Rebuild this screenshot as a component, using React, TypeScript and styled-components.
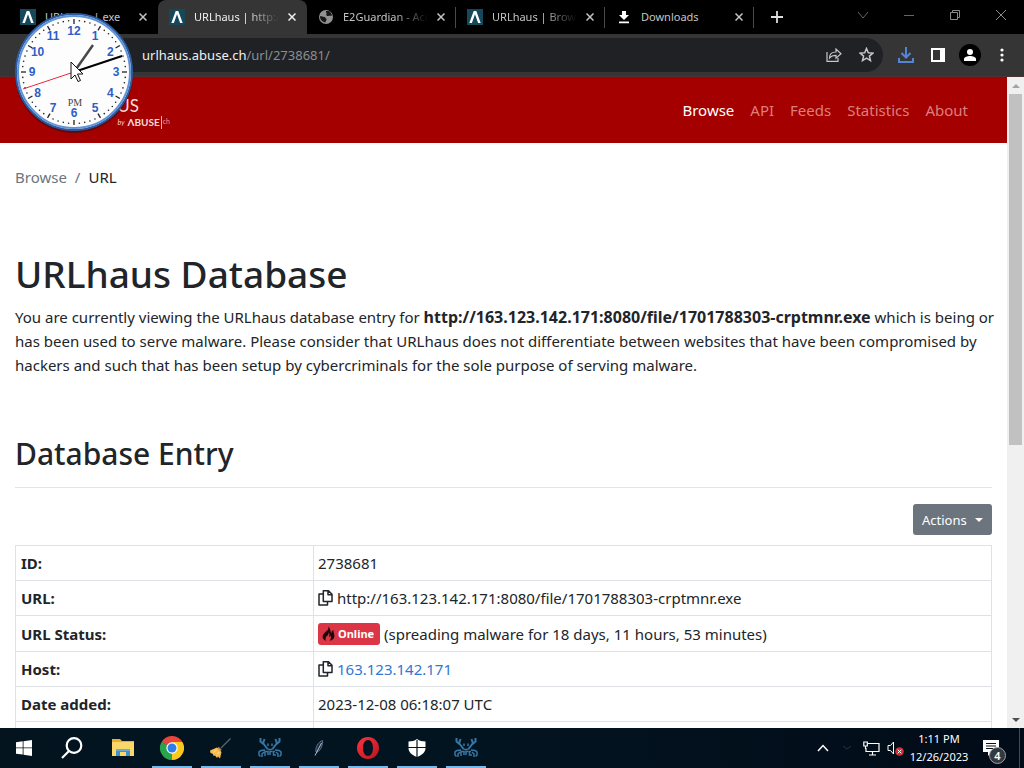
import React from 'react';
import styled, { createGlobalStyle, css } from 'styled-components';

const GlobalStyle = createGlobalStyle`
  *, *::before, *::after { box-sizing: border-box; }
  body { margin: 0; overflow: hidden; font-family: "Noto Sans", sans-serif; color: #212529; background: #fff; }
  button { font: inherit; border: 0; padding: 0; background: none; color: inherit; }
  a { color: inherit; text-decoration: none; }
  svg { display: block; flex: none; }
`;

const Screen = styled.div`
  position: relative;
  display: flex;
  flex-direction: column;
  height: 100vh;
`;

/* Browser chrome */
const TabStrip = styled.header`
  display: flex;
  flex: none;
  height: 34px;
  padding-left: 9px;
  background: #000;
  color: #c4c4c4;
`;

const Tab = styled.div<{ $active?: boolean; $divider?: boolean }>`
  display: flex;
  align-items: center;
  gap: 9px;
  width: 149px;
  padding: 0 10px 0 11px;
  border-right: 1px solid ${(p) => (p.$divider ? '#4a4a4a' : 'transparent')};
  border-image: ${(p) => (p.$divider ? 'linear-gradient(transparent 8px, #4a4a4a 8px, #4a4a4a 27px, transparent 27px) 1' : 'none')};
  ${(p) =>
    p.$active &&
    css`
      background: #353535;
      border-radius: 8px 8px 0 0;
      color: #f0f0f0;
    `}
`;

const TabTitle = styled.span<{ $fade?: boolean }>`
  flex: 1;
  min-width: 0;
  overflow: hidden;
  white-space: nowrap;
  font-size: 11px;
  line-height: 16px;
  ${(p) => p.$fade && css`mask-image: linear-gradient(to right, #000 60%, transparent);`}
`;

const IconButton = styled.button`
  display: grid;
  place-items: center;
`;

const NewTab = styled(IconButton)`
  width: 45px;
`;

const WindowButtons = styled.div`
  display: flex;
  margin-left: auto;
  height: 29px;
  color: #8c8c8c;
`;

const WindowButton = styled(IconButton)`
  width: 46px;
`;

const Toolbar = styled.div`
  display: flex;
  align-items: center;
  flex: none;
  height: 43px;
  padding: 0 6px 1px 92px;
  background: #353535;
  border-bottom: 1px solid #4c3436;
`;

const AddressBox = styled.div`
  display: flex;
  align-items: center;
  flex: 1;
  height: 34px;
  padding: 0 9px 0 50px;
  border-radius: 17px;
  background: #1f2124;
  color: #c6c6c6;
`;

const Address = styled.p`
  flex: 1;
  margin: 0;
  font-size: 13px;
  line-height: 20px;
  color: #8c8e90;
`;

const AddressHost = styled.span`
  color: #f0f0f0;
`;

const ToolButton = styled(IconButton)`
  width: 32px;
  height: 32px;
`;

const ToolGroup = styled.div`
  display: flex;
  padding-left: 7px;
  color: #fff;
`;

const AddressActions = styled.div`
  display: flex;
  margin-right: -8px;
`;

/* Web page */
const Viewport = styled.div`
  display: flex;
  flex: 1;
  min-height: 0;
`;

const Page = styled.div`
  flex: 1;
  min-width: 0;
  overflow: hidden;
`;

const NavBar = styled.nav`
  display: flex;
  align-items: center;
  justify-content: space-between;
  height: 66px;
  padding: 0 39px 0 16px;
  background: #a50000;
`;

const Brand = styled.a`
  display: flex;
  flex-direction: column;
  align-items: flex-end;
  width: 154px;
  padding-top: 4px;
  color: #f6dcdc;
`;

const BrandName = styled.span`
  width: 123px;
  margin-right: 31px;
  text-align: right;
  font-family: Lato, sans-serif;
  font-size: 17px;
  line-height: 20px;
`;

const BrandOwner = styled.span`
  display: flex;
  align-items: center;
  gap: 3px;
  font-family: Lato, sans-serif;
  font-size: 10px;
  font-weight: 700;
  line-height: 13px;
`;

const BrandBy = styled.i`
  font-size: 7px;
  font-weight: 400;
`;

const BrandTld = styled.span`
  margin-left: -2px;
  padding: 0 0 3px 1px;
  border-left: 1px solid #e8b0b0;
  font-size: 7px;
  font-weight: 400;
  line-height: 10px;
  color: #e99;
`;

const NavLinks = styled.div`
  display: flex;
  gap: 16px;
  font-size: 15px;
  line-height: 24px;
`;

const NavLink = styled.a<{ $current?: boolean }>`
  color: ${(p) => (p.$current ? '#fff' : '#dc7f7c')};
`;

const Content = styled.main`
  padding: 0 15px;
  font-size: 15px;
  line-height: 24px;
`;

const Breadcrumb = styled.div`
  display: flex;
  gap: 8px;
  padding: 22px 0 0;
  color: #6c757d;
`;

const Crumb = styled.span`
  color: #212529;
`;

const Title = styled.h1`
  margin: 61px 0 7px;
  font-size: 37px;
  font-weight: 500;
  line-height: 48px;
`;

const Intro = styled.p`
  margin: 0 -4px 0 0;
`;

const EntryUrl = styled.strong`
  font-size: 16px;
  line-height: 20px;
`;

const SectionTitle = styled.h2`
  margin: 57px 0 0;
  padding-bottom: 13px;
  border-bottom: 1px solid #e3e4e5;
  font-size: 30px;
  font-weight: 500;
  line-height: 40px;
`;

const ActionRow = styled.div`
  display: flex;
  justify-content: flex-end;
  padding: 16px 0 10px;
`;

const ActionsButton = styled.button`
  display: flex;
  align-items: center;
  justify-content: space-between;
  width: 79px;
  height: 31px;
  padding: 0 9px;
  border-radius: 3px;
  background: #6c757d;
  color: #fff;
  font-size: 13px;
`;

const Caret = styled.span`
  border: 4px solid transparent;
  border-top-color: #fff;
  border-bottom: 0;
`;

const EntryTable = styled.table`
  width: 100%;
  table-layout: fixed;
  border-collapse: collapse;
`;

const HeadCell = styled.th<{ $tall?: boolean }>`
  width: 298px;
  height: ${(p) => (p.$tall ? 36 : 35)}px;
  padding: 0 5px;
  border: 1px solid #dee2e6;
  text-align: left;
`;

const Cell = styled.td`
  padding: 0 5px 0 4px;
  border: 1px solid #dee2e6;
`;

const Value = styled.div`
  display: flex;
  align-items: center;
  gap: 4px;
  line-height: 24px;
`;

const HostLink = styled.a`
  color: #2f78cf;
`;

const Badge = styled.span`
  display: flex;
  align-items: center;
  gap: 3px;
  width: 62px;
  height: 22px;
  padding-left: 4px;
  border-radius: 3px;
  background: #dc3545;
  color: #fff;
  font-size: 11px;
  font-weight: 700;
`;

const ScrollTrack = styled.div`
  display: flex;
  flex-direction: column;
  align-items: center;
  justify-content: space-between;
  flex: none;
  width: 17px;
  padding: 7px 0 6px;
  background: #f0f0f0;
`;

const ScrollThumb = styled.div`
  flex: 0 0 351px;
  width: 13px;
  margin: 6px 0 auto;
  background: #c1c1c1;
`;

const ScrollArrow = styled.div<{ $down?: boolean }>`
  border: 4px solid transparent;
  ${(p) => (p.$down ? 'border-top-color: #505050; border-bottom: 0;' : 'border-bottom-color: #a3a3a3; border-top: 0;')}
`;

/* Desktop */
const Taskbar = styled.footer`
  display: flex;
  flex: none;
  height: 40px;
  background: linear-gradient(to right, #03141f, #021420 50%, #020b18);
  color: #fff;
`;

const Apps = styled.div`
  display: flex;
  gap: 1px;
  margin-left: 3px;
`;

const TaskButton = styled(IconButton)<{ $running?: boolean }>`
  width: 48px;
  height: 40px;
  ${(p) => p.$running && css`background: linear-gradient(#76b9ed, #76b9ed) 50% 100% / 40px 2px no-repeat;`}
`;

const Tray = styled.div`
  display: flex;
  align-items: center;
  margin-left: auto;
  padding-right: 4px;
`;

const TrayButton = styled(IconButton)`
  width: 24px;
  height: 40px;
`;

const DateTime = styled.time`
  width: 64px;
  text-align: center;
  font-size: 11px;
  line-height: 18px;
`;

const Notifications = styled.button`
  position: relative;
  display: grid;
  place-items: center;
  width: 49px;
  height: 40px;
  padding-right: 8px;
  border-right: 1px solid #3b4a55;
`;

const Count = styled.span`
  position: absolute;
  right: 13px;
  bottom: 4px;
  width: 17px;
  height: 17px;
  border: 1px solid #99a0a6;
  border-radius: 50%;
  background: #34393e;
  font-size: 11px;
  font-weight: 600;
  line-height: 15px;
`;

const ClockWidget = styled.div`
  position: absolute;
  top: 11px;
  left: 13px;
`;

function Close({ size = 8 }: { size?: number }) {
  return (
    <svg width={size} height={size} viewBox="0 0 8 8" stroke="currentColor" strokeWidth="1.5">
      <path d="M0.5 0.5 7.5 7.5M7.5 0.5 0.5 7.5" />
    </svg>
  );
}

function HausIcon() {
  return (
    <svg width="16" height="16" viewBox="0 0 16 16">
      <rect width="16" height="16" fill="#14485a" />
      <path d="M2.3 14 6.7 2h2.6l4.4 12h-2.6L8 5.3 4.9 14Z" fill="#fff" />
    </svg>
  );
}

function GlobeIcon() {
  return (
    <svg width="16" height="16" viewBox="0 0 16 16">
      <circle cx="8" cy="8" r="7" fill="#929292" />
      <path d="M2 7c2 0 2.500 1 4.500 1 1 0 1 1.500 2 2 .5 1-1 1.500-1 3.500C4.500 13 2 11 2 7ZM8 2h3c1.500 1 2.500 2.500 3 4.500-1.500 1-2-.5-3.500.5C9 7.500 7.500 6 8.500 5 9 4 7.500 3.500 8 2Z" fill="#181818" />
    </svg>
  );
}

function DownloadsIcon() {
  return (
    <svg width="16" height="16" viewBox="0 0 16 16" fill="#fff">
      <path d="M6 2h4v4h3l-5 5-5-5h3ZM3 12.500h10v1.800H3Z" />
    </svg>
  );
}

const TABS = [
  { title: 'URLhaus | exe', icon: <HausIcon /> },
  { title: 'URLhaus | http://163.123', icon: <HausIcon />, active: true, fade: true },
  { title: 'E2Guardian - Access Denied', icon: <GlobeIcon />, fade: true, divider: true },
  { title: 'URLhaus | Browse', icon: <HausIcon />, fade: true, divider: true },
  { title: 'Downloads', icon: <DownloadsIcon />, divider: true },
];

function CopyIcon() {
  return (
    <svg width="15" height="16" viewBox="0 0 15 16" fill="none" stroke="#212529" strokeWidth="1.500" strokeLinejoin="round">
      <path d="M5.300.800h5.200l3.500 3.500v7.200H5.300ZM10 1v3.700h4M5 4H1v11h8.500v-3.300" />
    </svg>
  );
}

function FireIcon() {
  return (
    <svg width="13" height="15" viewBox="0 0 13 15">
      <path d="M6.200.500c.8 2.700-.5 3.600-2.200 5.100C1.900 7.500.400 9 .600 11c.2 2.100 1.700 3.500 3.600 3.800-1.500-2.200-.5-3.700 1-5.100 1.200-1.100 1.500-2.200 1.500-3.200 1 1.500.9 3 .1 4.300.7 0 1.400-.7 1.800-1.300.6 1.800.4 3.500-.9 5.300 2.600-.4 4.500-2 4.700-4.500.2-2.200-1.300-3.700-1-6.300-1.700.7-2 2-1.900 3.300C8 6.200 9.100 2.800 6.200.500Z" fill="#17090b" />
    </svg>
  );
}

function ChromeIcon() {
  return (
    <svg width="24" height="24" viewBox="0 0 24 24">
      <path d="M12 12 1.600 6A12 12 0 0 1 22.400 6Z" fill="#e8453c" />
      <path d="M12 12 22.400 6A12 12 0 0 1 12 24Z" fill="#fbc81c" />
      <path d="M12 12v12A12 12 0 0 1 1.600 6Z" fill="#2ba24c" />
      <path d="M12 6h10.400L17.200 15 12 24l5.200-9Z" fill="#fbc81c" />
      <path d="M1.600 6 6.800 15 12 12Z" fill="#2ba24c" />
      <circle cx="12" cy="12" r="5.700" fill="#fff" />
      <circle cx="12" cy="12" r="4.500" fill="#2f7de9" />
    </svg>
  );
}

function FolderIcon() {
  return (
    <svg width="22" height="20" viewBox="0 0 22 20">
      <path d="M0 1h8l2 2h12v15H0Z" fill="#e5ae37" />
      <path d="M0 4h22v14H0Z" fill="#fbd668" />
      <path d="M4 18v-7h14v7h-4v-4H8v4Z" fill="#3f8fca" />
      <path d="M4 11h14v2H4Z" fill="#65addb" />
    </svg>
  );
}

function BroomIcon() {
  return (
    <svg width="24" height="24" viewBox="0 0 24 24">
      <path d="m12 12 9.500-9.500" stroke="#59666a" strokeWidth="1.300" />
      <path d="m9 11.500 3 3" stroke="#b9854b" strokeWidth="2" />
      <path d="M8 11.500 12.500 16 11 22.500l-2-2-1 1.500-2-2.500-1.500.5L4 18l-2.500-1L1 14.500Z" fill="#f6bd50" />
      <path d="m7.500 14-3 2.500M10 16l-2 2.500" stroke="#ffe0a0" />
    </svg>
  );
}

function CrabIcon() {
  return (
    <svg width="26" height="22" viewBox="0 0 26 22" fill="none" stroke="#3876a6">
      <path d="M3.500 1v3.500L6 6.500 7.500 2M22.500 1v3.500L20 6.500 18.500 2M6 6l4.500 6M20 6l-4.500 6" strokeWidth="2" />
      <path d="M11 6.500V9M15 6.500V9M10 11.500c2 1.500 4 1.500 6 0" strokeWidth="1.500" />
      <path d="M8 13c-3 0-5 .5-6 2v3l1.500 1.500M18 13c3 0 5 .5 6 2v3l-1.500 1.500M7 15l-2 2v3M19 15l2 2v3M8 19v-4.500h3V18M13 18v-3.500h2.500M18 14.500h-1.500V18H19" strokeWidth="1.500" />
    </svg>
  );
}

function FeatherIcon() {
  return (
    <svg width="16" height="20" viewBox="0 0 16 20">
      <path d="M5 14C4 9 7.500 4 11.500 2.500 12 6 10 12 6.500 14Z" fill="#1b2b40" stroke="#60778f" />
      <path d="M4 17.500 10.500 5" stroke="#b5c3d1" />
    </svg>
  );
}

function OperaIcon() {
  return (
    <svg width="24" height="24" viewBox="0 0 24 24">
      <defs>
        <linearGradient id="opera" x2="1" y2="1">
          <stop stopColor="#ff3340" />
          <stop offset="1" stopColor="#b8141f" />
        </linearGradient>
      </defs>
      <path fillRule="evenodd" fill="url(#opera)" d="M12 1a11 11 0 1 0 0 22 11 11 0 1 0 0-22ZM12 4c3 0 5 3.500 5 8s-2 8-5 8-5-3.500-5-8 2-8 5-8Z" />
    </svg>
  );
}

function ShieldIcon() {
  return (
    <svg width="18" height="18" viewBox="0 0 18 18">
      <path d="M9 0c2.500 1.800 5.200 2.500 8.500 2.500V9c0 4-3 7-8.500 9C3.500 16 .500 13 .500 9V2.500C3.800 2.500 6.500 1.800 9 0Z" fill="#fff" />
      <path d="M9 1v17M0 8.500h18" stroke="#021420" strokeWidth="1.200" />
    </svg>
  );
}

const RUNNING_APPS = [
  { name: 'Google Chrome', icon: <ChromeIcon /> },
  { name: 'Cleaner', icon: <BroomIcon /> },
  { name: 'Crab', icon: <CrabIcon /> },
  { name: 'Feather', icon: <FeatherIcon /> },
  { name: 'Opera', icon: <OperaIcon /> },
  { name: 'Windows Security', icon: <ShieldIcon /> },
  { name: 'Crab', icon: <CrabIcon /> },
];

function AnalogClock() {
  const turn = (n: number) => (n * Math.PI) / 30;
  return (
    <ClockWidget>
      <svg width="122" height="124" viewBox="0 0 122 124">
        <ellipse cx="61" cy="63" rx="59" ry="59" fill="#10141a" opacity=".45" />
        <circle cx="61" cy="61" r="58" fill="#fdfdfe" stroke="#2d5ba3" strokeWidth="2" />
        <circle cx="61" cy="61" r="56" fill="none" stroke="#5f93d6" strokeWidth="2" />
        {Array.from({ length: 60 }, (_, i) => {
          const s = Math.sin(turn(i));
          const c = -Math.cos(turn(i));
          return i % 5 === 0 ? (
            <path key={i} d={`M${61 + 48 * s} ${61 + 48 * c}L${61 + 53 * s} ${61 + 53 * c}`} stroke="#222" strokeWidth="1.300" />
          ) : (
            <circle key={i} cx={61 + 51.500 * s} cy={61 + 51.500 * c} r=".8" fill="#222" />
          );
        })}
        {Array.from({ length: 12 }, (_, i) => (
          <text
            key={i}
            x={61 + 42 * Math.sin(turn((i + 1) * 5))}
            y={65 - 41 * Math.cos(turn((i + 1) * 5))}
            textAnchor="middle"
            fontFamily="Liberation Sans, sans-serif"
            fontWeight="700"
            fontSize="12"
            fill="#2f5fc6"
          >
            {i + 1}
          </text>
        ))}
        <text x="62" y="95" textAnchor="middle" fontFamily="Liberation Serif, serif" fontSize="10" fill="#444">PM</text>
        <path d="M61 61 80 34" stroke="#484848" strokeWidth="2.500" />
        <path d="M61 61 109 45" stroke="#000" strokeWidth="2" />
        <path d="M61 61 10 78" stroke="#e02b45" />
        <path d="M58 51v17l4-4 3 6.500 2.500-1-3-6.500h5.500Z" fill="#fff" stroke="#111" />
      </svg>
    </ClockWidget>
  );
}

export default function App() {
  return (
    <Screen>
      <GlobalStyle />
      <TabStrip>
        {TABS.map((tab, i) => (
          <Tab key={i} $active={tab.active} $divider={tab.divider}>
            {tab.icon}
            <TabTitle $fade={tab.fade}>{tab.title}</TabTitle>
            <IconButton aria-label="Close tab"><Close /></IconButton>
          </Tab>
        ))}
        <NewTab aria-label="New tab">
          <svg width="12" height="12" viewBox="0 0 12 12" stroke="#ddd" strokeWidth="1.800"><path d="M6 0v12M0 6h12" /></svg>
        </NewTab>
        <WindowButtons>
          <WindowButton aria-label="Search tabs">
            <svg width="12" height="8" viewBox="0 0 12 8" fill="none" stroke="#666"><path d="m1 1 5 6 5-6" /></svg>
          </WindowButton>
          <WindowButton aria-label="Minimize">
            <svg width="10" height="10" viewBox="0 0 10 10" stroke="#666"><path d="M0 5.500h10" /></svg>
          </WindowButton>
          <WindowButton aria-label="Restore">
            <svg width="10" height="10" viewBox="0 0 10 10" fill="none" stroke="currentColor"><path d="M.5 2.500h7v7h-7ZM2.500 2V.5h7v7H8" /></svg>
          </WindowButton>
          <WindowButton aria-label="Close">
            <svg width="10" height="10" viewBox="0 0 10 10" stroke="currentColor"><path d="m0 0 10 10M10 0 0 10" /></svg>
          </WindowButton>
        </WindowButtons>
      </TabStrip>
      <Toolbar>
        <AddressBox>
          <Address><AddressHost>urlhaus.abuse.ch</AddressHost>/url/2738681/</Address>
          <AddressActions>
            <ToolButton aria-label="Share">
              <svg width="16" height="14" viewBox="0 0 16 14" fill="none" stroke="currentColor" strokeWidth="1.200">
                <path d="M1 4v9.300h11V10M3.500 10c0-4 2.500-6 6.500-6V1l5 4.700-5 4.500V7.300C7 7.300 5 8 3.500 10Z" />
              </svg>
            </ToolButton>
            <ToolButton aria-label="Bookmark">
              <svg width="15" height="15" viewBox="0 0 15 15" fill="none" stroke="currentColor" strokeWidth="1.500">
                <path d="m7.500 1.500 1.800 4.200 4.600.4-3.500 3 1.100 4.500-4-2.400-4 2.400 1.100-4.500-3.500-3 4.600-.4Z" />
              </svg>
            </ToolButton>
          </AddressActions>
        </AddressBox>
        <ToolGroup>
          <ToolButton aria-label="Downloads">
            <svg width="16" height="16" viewBox="0 0 16 16" fill="none" stroke="#5384d8" strokeWidth="2">
              <path d="M8 0v10M3.500 6 8 10.500 12.500 6M1 11v4h14v-4" />
            </svg>
          </ToolButton>
          <ToolButton aria-label="Side panel">
            <svg width="14" height="14" viewBox="0 0 14 14"><path fillRule="evenodd" fill="#fff" d="M0 0h14v14H0ZM2 2v10h7V2Z" /></svg>
          </ToolButton>
          <ToolButton aria-label="Profile">
            <svg width="22" height="22" viewBox="0 0 22 22">
              <circle cx="11" cy="11" r="11" fill="#000" />
              <circle cx="11" cy="8" r="3" fill="#fff" />
              <path d="M5 17v-2c0-2 3.500-3 6-3s6 1 6 3v2Z" fill="#fff" />
            </svg>
          </ToolButton>
          <ToolButton aria-label="Menu">
            <svg width="4" height="14" viewBox="0 0 4 14" fill="#fff">
              <circle cx="2" cy="2" r="1.600" /><circle cx="2" cy="7" r="1.600" /><circle cx="2" cy="12" r="1.600" />
            </svg>
          </ToolButton>
        </ToolGroup>
      </Toolbar>

      <Viewport>
        <Page>
          <NavBar>
            <Brand href="#">
              <BrandName>HAUS</BrandName>
              <BrandOwner><BrandBy>by</BrandBy>ΛBUSE<BrandTld>ch</BrandTld></BrandOwner>
            </Brand>
            <NavLinks>
              <NavLink href="#" $current>Browse</NavLink>
              <NavLink href="#">API</NavLink>
              <NavLink href="#">Feeds</NavLink>
              <NavLink href="#">Statistics</NavLink>
              <NavLink href="#">About</NavLink>
            </NavLinks>
          </NavBar>
          <Content>
            <Breadcrumb><a href="#">Browse</a><span>/</span><Crumb>URL</Crumb></Breadcrumb>
            <Title>URLhaus Database</Title>
            <Intro>
              You are currently viewing the URLhaus database entry for{' '}
              <EntryUrl>http://163.123.142.171:8080/file/1701788303-crptmnr.exe</EntryUrl> which is being or has been used to
              serve malware. Please consider that URLhaus does not differentiate between websites that have been
              compromised by hackers and such that has been setup by cybercriminals for the sole purpose of serving malware.
            </Intro>
            <SectionTitle>Database Entry</SectionTitle>
            <ActionRow><ActionsButton>Actions<Caret /></ActionsButton></ActionRow>
            <EntryTable>
              <tbody>
                <tr><HeadCell scope="row">ID:</HeadCell><Cell>2738681</Cell></tr>
                <tr>
                  <HeadCell scope="row">URL:</HeadCell>
                  <Cell><Value><CopyIcon />http://163.123.142.171:8080/file/1701788303-crptmnr.exe</Value></Cell>
                </tr>
                <tr>
                  <HeadCell scope="row" $tall>URL Status:</HeadCell>
                  <Cell><Value><Badge><FireIcon />Online</Badge>(spreading malware for 18 days, 11 hours, 53 minutes)</Value></Cell>
                </tr>
                <tr>
                  <HeadCell scope="row">Host:</HeadCell>
                  <Cell><Value><CopyIcon /><HostLink href="#">163.123.142.171</HostLink></Value></Cell>
                </tr>
                <tr><HeadCell scope="row">Date added:</HeadCell><Cell>2023-12-08 06:18:07 UTC</Cell></tr>
                <tr><HeadCell scope="row" /><Cell /></tr>
              </tbody>
            </EntryTable>
          </Content>
        </Page>
        <ScrollTrack><ScrollArrow /><ScrollThumb /><ScrollArrow $down /></ScrollTrack>
      </Viewport>

      <Taskbar>
        <TaskButton aria-label="Start">
          <svg width="16" height="16" viewBox="0 0 16 16" fill="#fff">
            <path d="M0 2.300 6.700 1.300v6.200H0ZM7.500 1.200 16 0v7.500H7.500ZM0 8.300h6.700v6.300L0 13.700ZM7.500 8.300H16V16l-8.500-1.200Z" />
          </svg>
        </TaskButton>
        <TaskButton aria-label="Search">
          <svg width="22" height="22" viewBox="0 0 22 22" fill="none" stroke="#fff" strokeWidth="2.200">
            <circle cx="13" cy="8.500" r="7.300" /><path d="m8 14-7 7" />
          </svg>
        </TaskButton>
        <Apps>
          <TaskButton aria-label="File Explorer"><FolderIcon /></TaskButton>
          {RUNNING_APPS.map((app, i) => (
            <TaskButton key={i} $running aria-label={app.name}>{app.icon}</TaskButton>
          ))}
        </Apps>
        <Tray>
          <TrayButton aria-label="Show hidden icons">
            <svg width="12" height="8" viewBox="0 0 12 8" fill="none" stroke="#fff" strokeWidth="1.500"><path d="m1 7 5-5.500L11 7" /></svg>
          </TrayButton>
          <TrayButton aria-label="Status">
            <svg width="8" height="4" viewBox="0 0 8 4" fill="none" stroke="#29333d"><path d="m0 0 4 3 4-3" /></svg>
          </TrayButton>
          <TrayButton aria-label="Network">
            <svg width="17" height="15" viewBox="0 0 17 15" fill="none" stroke="#fff" strokeWidth="1.200">
              <path d="M5 2.500h11v8H3V7M9.500 10.500V14M6 14h7M.8 1h3.500v4H.8ZM2.500 5v3" />
            </svg>
          </TrayButton>
          <TrayButton aria-label="Volume muted">
            <svg width="17" height="15" viewBox="0 0 17 15" fill="none">
              <path d="M1 4.500h2.500l3-3.500v12l-3-3.500H1Z" stroke="#fff" />
              <circle cx="12.500" cy="10.500" r="4.300" fill="#d62c36" />
              <path d="m10.700 8.700 3.600 3.600m0-3.600-3.600 3.600" stroke="#fff" />
            </svg>
          </TrayButton>
          <DateTime dateTime="2023-12-26T13:11">1:11 PM<br />12/26/2023</DateTime>
          <Notifications aria-label="Notifications">
            <svg width="16" height="16" viewBox="0 0 16 16">
              <path d="M0 0h16v12H9l-4 4v-4H0Z" fill="#fff" />
              <path d="M3 3.500h10M3 6h10M3 8.500h7" stroke="#07121e" />
            </svg>
            <Count>4</Count>
          </Notifications>
        </Tray>
      </Taskbar>
      <AnalogClock />
    </Screen>
  );
}
